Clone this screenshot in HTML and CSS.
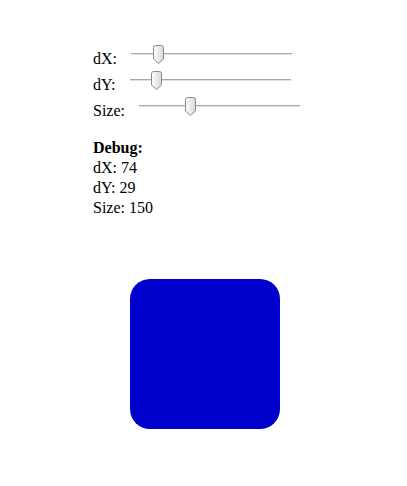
FILE: index.html
```html
<!DOCTYPE html>
<html>
<head>
<meta charset="utf-8">
<link rel="stylesheet" href="styles.css">
</head>
<body>
<div class="page">
  <div class="controls">
    <div class="row">
      <span class="label">dX:</span>
      <div class="slider">
        <div class="track"></div>
        <svg class="thumb" style="left:22px" width="11" height="19" viewBox="0 0 11 19"><defs><linearGradient id="g1" x1="0" y1="0" x2="1" y2="0"><stop offset="0" stop-color="#ffffff"/><stop offset="1" stop-color="#d8d8d8"/></linearGradient></defs><path d="M0.5 2.5 Q0.5 0.5 2.5 0.5 L8.5 0.5 Q10.5 0.5 10.5 2.5 L10.5 14 L5.5 18.5 L0.5 14 Z" fill="url(#g1)" stroke="#8a8a8a"/></svg>
      </div>
    </div>
    <div class="row">
      <span class="label">dY:</span>
      <div class="slider">
        <div class="track"></div>
        <svg class="thumb" style="left:21px" width="11" height="19" viewBox="0 0 11 19"><path d="M0.5 2.5 Q0.5 0.5 2.5 0.5 L8.5 0.5 Q10.5 0.5 10.5 2.5 L10.5 14 L5.5 18.5 L0.5 14 Z" fill="url(#g1)" stroke="#8a8a8a"/></svg>
      </div>
    </div>
    <div class="row">
      <span class="label">Size:</span>
      <div class="slider">
        <div class="track"></div>
        <svg class="thumb" style="left:46px" width="11" height="19" viewBox="0 0 11 19"><path d="M0.5 2.5 Q0.5 0.5 2.5 0.5 L8.5 0.5 Q10.5 0.5 10.5 2.5 L10.5 14 L5.5 18.5 L0.5 14 Z" fill="url(#g1)" stroke="#8a8a8a"/></svg>
      </div>
    </div>
  </div>
  <div class="debug">
    <div class="debug-title">Debug:</div>
    <div>dX: 74</div>
    <div>dY: 29</div>
    <div>Size: 150</div>
  </div>
  <div class="stage">
    <div class="box"></div>
  </div>
</div>
</body>
</html>
```

FILE: styles.css
```css
html, body {
  margin: 0;
  padding: 0;
  background: #ffffff;
}

body {
  font-family: "Liberation Serif", "Times New Roman", serif;
  font-size: 16px;
  color: #000000;
}

.page {
  padding: 46px 0 0 93px;
}

.controls {
  display: flex;
  flex-direction: column;
}

.row {
  display: flex;
  height: 26px;
  line-height: 26px;
}

.label {
  white-space: nowrap;
}

.slider {
  position: relative;
  width: 161px;
  height: 26px;
  margin-left: 14px;
}

.track {
  position: absolute;
  left: 0;
  right: 0;
  top: 7px;
  height: 1px;
  background: #a8a8a8;
  border-bottom: 1px solid #e2e2e2;
}

.thumb {
  position: absolute;
  top: -1px;
  display: block;
}

.debug {
  margin-top: 14px;
  line-height: 20px;
}

.debug-title {
  font-weight: bold;
}

.stage {
  padding: 61px 0 0 37px;
}

.box {
  width: 150px;
  height: 150px;
  background: #0000cc;
  border-radius: 20px;
}
```
